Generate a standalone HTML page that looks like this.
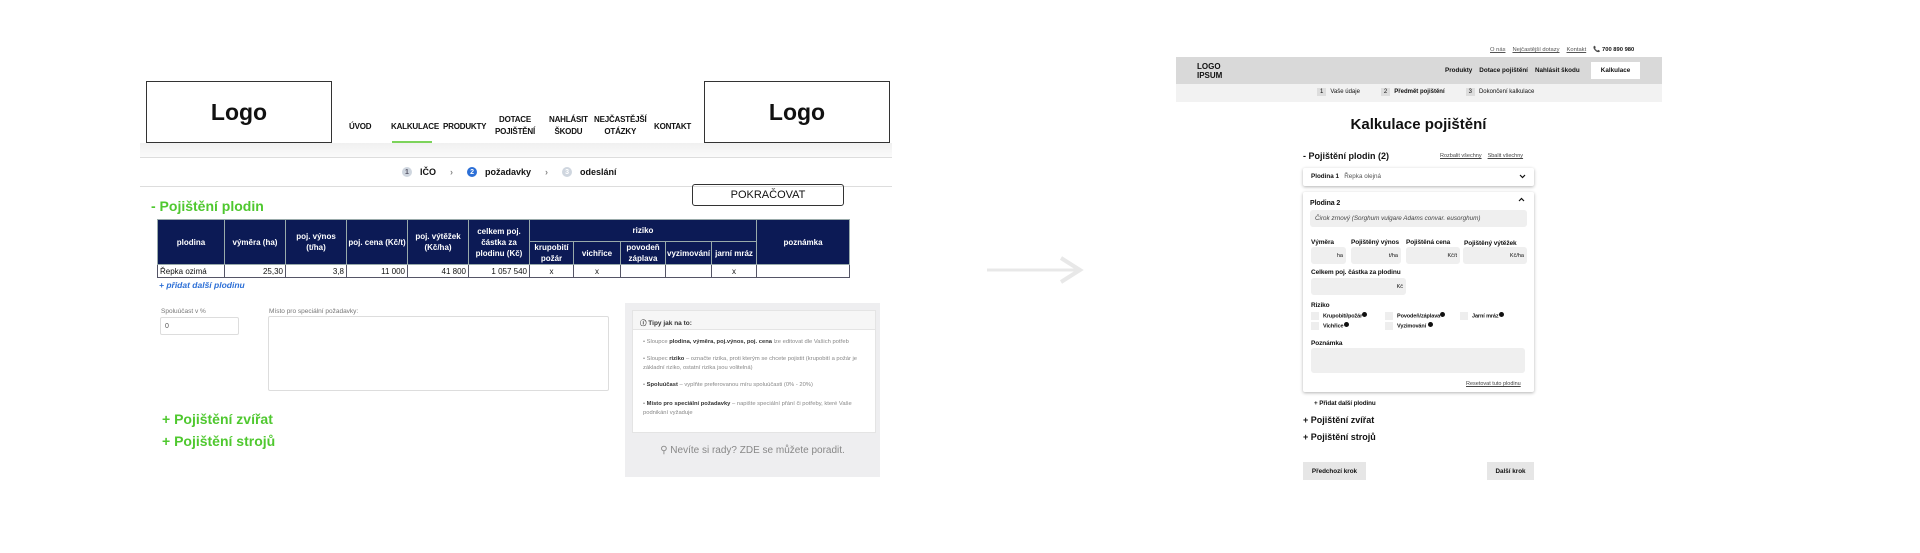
<!DOCTYPE html>
<html><head><meta charset="utf-8"><style>
*{box-sizing:border-box;margin:0;padding:0}
body{width:1920px;height:553px;background:#fff;position:relative;overflow:hidden;font-family:"Liberation Sans",sans-serif;color:#111}
.a{position:absolute}
.logo{border:1.5px solid #333;font-weight:bold;font-size:23px;display:flex;align-items:center;justify-content:center;background:#fff}
.nav{font-family:"Liberation Sans Narrow","Liberation Sans",sans-serif;font-size:8px;font-weight:bold;text-align:center;line-height:12px;color:#111;letter-spacing:-0.2px}
.green{color:#4fc82f;font-weight:bold;font-size:14px;font-family:"Liberation Sans Narrow","Liberation Sans",sans-serif}
table{border-collapse:collapse;font-size:8px;font-family:"Liberation Sans Narrow","Liberation Sans",sans-serif;table-layout:fixed}
th{background:#0c1a55;color:#fff;font-weight:bold;border:1px solid #9aa;padding:0 1px;line-height:11px;font-size:8px}
td{border:1px solid #556;height:13px;padding:0 2px;text-align:right;font-size:8px}
.g{background:#efefef;border-radius:3px}
.lbl{font-size:6.5px;font-weight:bold;letter-spacing:-0.1px}
.cb{width:8px;height:8px;background:#eee;display:inline-block;vertical-align:middle;margin-right:4px}
.i{display:inline-block;width:5px;height:5px;border-radius:50%;background:#111;vertical-align:top}
</style></head><body>
<!-- LEFT -->
<div class="a logo" style="left:146px;top:81px;width:186px;height:62px">Logo</div>
<div class="a logo" style="left:704px;top:81px;width:186px;height:62px">Logo</div>
<div class="a nav" style="left:349px;top:121px">ÚVOD</div>
<div class="a nav" style="left:391px;top:121px">KALKULACE</div>
<div class="a" style="left:392px;top:141px;width:40px;height:2px;background:#7cd35a"></div>
<div class="a nav" style="left:443px;top:121px">PRODUKTY</div>
<div class="a nav" style="left:495px;top:114px">DOTACE<br>POJIŠTĚNÍ</div>
<div class="a nav" style="left:549px;top:114px">NAHLÁSIT<br>ŠKODU</div>
<div class="a nav" style="left:594px;top:114px">NEJČASTĚJŠÍ<br>OTÁZKY</div>
<div class="a nav" style="left:654px;top:121px">KONTAKT</div>
<div class="a" style="left:140px;top:143px;width:752px;height:14px;background:linear-gradient(#f0f0f0,#fafafa)"></div>
<div class="a" style="left:140px;top:157px;width:752px;height:1px;background:#ddd"></div>
<div class="a" style="left:402px;top:167px;font-size:9px;font-weight:bold;display:flex;align-items:center;gap:8px;font-family:'Liberation Sans Narrow','Liberation Sans',sans-serif">
<span style="width:10px;height:10px;border-radius:50%;background:#cfd6df;color:#556;font-size:7px;display:inline-flex;align-items:center;justify-content:center">1</span>IČO<span style="color:#888;margin:0 6px">›</span>
<span style="width:10px;height:10px;border-radius:50%;background:#2c6fd6;color:#fff;font-size:7px;display:inline-flex;align-items:center;justify-content:center">2</span>požadavky<span style="color:#888;margin:0 6px">›</span>
<span style="width:10px;height:10px;border-radius:50%;background:#cfd6df;color:#fff;font-size:7px;display:inline-flex;align-items:center;justify-content:center">3</span>odeslání</div>
<div class="a" style="left:140px;top:186px;width:752px;height:1px;background:#ddd"></div>
<div class="a" style="left:692px;top:184px;width:152px;height:22px;border:1px solid #333;border-radius:3px;font-size:11px;display:flex;align-items:center;justify-content:center">POKRAČOVAT</div>
<div class="a green" style="left:151px;top:198px">- Pojištění plodin</div>
<table class="a" style="left:157px;top:219px;width:692px">
<colgroup><col style="width:67px"><col style="width:61px"><col style="width:61px"><col style="width:61px"><col style="width:61px"><col style="width:61px"><col style="width:44px"><col style="width:47px"><col style="width:45px"><col style="width:46px"><col style="width:45px"><col style="width:93px"></colgroup>
<tr style="height:22px"><th rowspan="2">plodina</th><th rowspan="2">výměra (ha)</th><th rowspan="2">poj. výnos<br>(t/ha)</th><th rowspan="2">poj. cena (Kč/t)</th><th rowspan="2">poj. výtěžek<br>(Kč/ha)</th><th rowspan="2">celkem poj.<br>částka za<br>plodinu (Kč)</th><th colspan="5">riziko</th><th rowspan="2">poznámka</th></tr>
<tr style="height:12px"><th>krupobití<br>požár</th><th>vichřice</th><th>povodeň<br>záplava</th><th>vyzimování</th><th>jarní mráz</th></tr>
<tr><td style="text-align:left">Řepka ozimá</td><td>25,30</td><td>3,8</td><td>11 000</td><td>41 800</td><td>1 057 540</td><td style="text-align:center">x</td><td style="text-align:center">x</td><td></td><td></td><td style="text-align:center">x</td><td></td></tr>
</table>
<div class="a" style="left:159px;top:280px;font-size:8.5px;font-weight:bold;font-style:italic;color:#2c6fd6;font-family:'Liberation Sans Narrow','Liberation Sans',sans-serif">+ přidat další plodinu</div>
<div class="a" style="left:161px;top:308px;font-size:6.5px;color:#777">Spoluúčast v %</div>
<div class="a" style="left:160px;top:317px;width:79px;height:18px;border:1px solid #ddd;border-radius:2px;font-size:7px;color:#555;padding:5px 4px">0</div>
<div class="a" style="left:269px;top:308px;font-size:6.5px;color:#777">Místo pro speciální požadavky:</div>
<div class="a" style="left:268px;top:316px;width:341px;height:75px;border:1px solid #ddd;border-radius:2px"></div>
<div class="a green" style="left:162px;top:411px">+ Pojištění zvířat</div>
<div class="a green" style="left:162px;top:433px">+ Pojištění strojů</div>
<div class="a" style="left:625px;top:303px;width:255px;height:174px;background:#eeeef0"></div>
<div class="a" style="left:632px;top:310px;width:244px;height:123px;background:#fff;border:1px solid #e4e4e4"></div>
<div class="a" style="left:632px;top:310px;width:244px;height:20px;background:#f6f6f6;border:1px solid #e4e4e4;font-size:6.5px;font-weight:bold;padding:6px 7px;color:#333">ⓘ Tipy jak na to:</div>
<div class="a" style="left:643px;top:338px;width:228px;font-size:5.8px;color:#888;line-height:9px">
<div>• Sloupce <b style="color:#333">plodina, výměra, poj.výnos, poj. cena</b> lze editovat dle Vašich potřeb</div>
<div style="margin-top:8px">• Sloupec <b style="color:#333">riziko</b> – označte rizika, proti kterým se chcete pojistit (krupobití a požár je základní riziko, ostatní rizika jsou volitelná)</div>
<div style="margin-top:8px">• <b style="color:#333">Spoluúčast</b> – vyplňte preferovanou míru spoluúčasti (0% - 20%)</div>
<div style="margin-top:10px">• <b style="color:#333">Místo pro speciální požadavky</b> – napište speciální přání či potřeby, které Vaše podnikání vyžaduje</div></div>
<div class="a" style="left:625px;top:445px;width:255px;text-align:center;font-size:10px;color:#888">⚲ Nevíte si rady? ZDE se můžete poradit.</div>
<!-- ARROW -->
<svg class="a" style="left:985px;top:254px" width="100" height="32"><path d="M2 16H92" stroke="#e8e8e8" stroke-width="3" fill="none"/><path d="M76 4L95 16L76 28" stroke="#e8e8e8" stroke-width="4" fill="none"/></svg>
<!-- RIGHT -->
<div class="a" style="left:1490px;top:47px;font-size:5.8px;color:#555;display:flex;gap:7px"><u>O nás</u><u>Nejčastější dotazy</u><u>Kontakt</u><b style="color:#111">📞 700 890 980</b></div>
<div class="a" style="left:1176px;top:57px;width:486px;height:27px;background:#d9d9d9"></div>
<div class="a" style="left:1197px;top:62px;font-size:8px;font-weight:bold;line-height:9px">LOGO<br>IPSUM</div>
<div class="a" style="left:1445px;top:67px;font-size:6.3px;font-weight:bold;display:flex;gap:7px"><span>Produkty</span><span>Dotace pojištění</span><span>Nahlásit škodu</span></div>
<div class="a" style="left:1591px;top:62px;width:49px;height:17px;background:#fff;font-size:6.3px;font-weight:bold;display:flex;align-items:center;justify-content:center">Kalkulace</div>
<div class="a" style="left:1176px;top:84px;width:486px;height:18px;background:#f2f2f2"></div>
<div class="a" style="left:1317px;top:88px;font-size:6px;display:flex;align-items:center;gap:4px">
<span style="background:#ddd;padding:1px 3px">1</span><span style="margin-right:17px">Vaše údaje</span>
<span style="background:#ddd;padding:1px 3px">2</span><b style="margin-right:17px">Předmět pojištění</b>
<span style="background:#ddd;padding:1px 3px">3</span><span>Dokončení kalkulace</span></div>
<div class="a" style="left:1303px;top:116px;width:231px;text-align:center;font-size:15px;font-weight:bold">Kalkulace pojištění</div>
<div class="a" style="left:1303px;top:151px;font-size:9px;font-weight:bold">- Pojištění plodin (2)</div>
<div class="a" style="left:1440px;top:153px;font-size:5.5px;color:#444;display:flex;gap:6px"><u>Rozbalit všechny</u><u>Sbalit všechny</u></div>
<div class="a" style="left:1303px;top:168px;width:231px;height:18px;background:#fff;box-shadow:0 1px 3px rgba(0,0,0,.3);border-radius:2px;font-size:6.3px;padding:5px 8px"><b>Plodina 1</b>&nbsp;&nbsp;&nbsp;<span style="color:#555">Řepka olejná</span><svg style="position:absolute;right:8px;top:6px" width="7" height="5"><path d="M1 1L3.5 3.5L6 1" stroke="#111" stroke-width="1.2" fill="none"/></svg></div>
<div class="a" style="left:1303px;top:192px;width:231px;height:200px;background:#fff;box-shadow:0 1px 3px rgba(0,0,0,.3);border-radius:2px"></div>
<div class="a lbl" style="left:1310px;top:200px;font-size:7px">Plodina 2</div>
<svg class="a" style="left:1518px;top:197px" width="7" height="5"><path d="M1 4L3.5 1.5L6 4" stroke="#111" stroke-width="1.2" fill="none"/></svg>
<div class="a g" style="left:1310px;top:210px;width:217px;height:17px;font-size:6.3px;font-style:italic;color:#444;padding:5px 5px">Čirok zrnový (Sorghum vulgare Adams convar. eusorghum)</div>
<div class="a lbl" style="left:1311px;top:239px">Výměra</div>
<div class="a lbl" style="left:1351px;top:239px">Pojištěný výnos</div>
<div class="a lbl" style="left:1406px;top:239px">Pojištěná cena</div>
<div class="a lbl" style="left:1464px;top:240px">Pojištěný výtěžek</div>
<div class="a g" style="left:1311px;top:247px;width:35px;height:17px;font-size:5.5px;text-align:right;padding:6px 3px">ha</div>
<div class="a g" style="left:1351px;top:247px;width:50px;height:17px;font-size:5.5px;text-align:right;padding:6px 3px">t/ha</div>
<div class="a g" style="left:1406px;top:247px;width:54px;height:17px;font-size:5.5px;text-align:right;padding:6px 3px">Kč/t</div>
<div class="a g" style="left:1463px;top:247px;width:64px;height:17px;font-size:5.5px;text-align:right;padding:6px 3px">Kč/ha</div>
<div class="a lbl" style="left:1311px;top:269px">Celkem poj. částka za plodinu</div>
<div class="a g" style="left:1311px;top:278px;width:95px;height:17px;font-size:5.5px;text-align:right;padding:6px 3px">Kč</div>
<div class="a lbl" style="left:1311px;top:302px">Riziko</div>
<div class="a lbl" style="left:1311px;top:312px;font-size:5.5px"><span class="cb"></span>Krupobití/požár<span class="i"></span></div>
<div class="a lbl" style="left:1385px;top:312px;font-size:5.5px"><span class="cb"></span>Povodeň/záplava<span class="i"></span></div>
<div class="a lbl" style="left:1460px;top:312px;font-size:5.5px"><span class="cb"></span>Jarní mráz<span class="i"></span></div>
<div class="a lbl" style="left:1311px;top:322px;font-size:5.5px"><span class="cb"></span>Vichřice<span class="i"></span></div>
<div class="a lbl" style="left:1385px;top:322px;font-size:5.5px"><span class="cb"></span>Vyzimování <span class="i"></span></div>
<div class="a lbl" style="left:1311px;top:340px">Poznámka</div>
<div class="a g" style="left:1311px;top:348px;width:214px;height:25px"></div>
<div class="a" style="left:1466px;top:381px;font-size:5.5px;color:#444"><u>Resetovat tuto plodinu</u></div>
<div class="a lbl" style="left:1314px;top:400px;font-size:6.3px">+ Přidat další plodinu</div>
<div class="a" style="left:1303px;top:415px;font-size:9px;font-weight:bold">+ Pojištění zvířat</div>
<div class="a" style="left:1303px;top:432px;font-size:9px;font-weight:bold">+ Pojištění strojů</div>
<div class="a" style="left:1303px;top:462px;width:63px;height:18px;background:#e6e6e6;font-size:6.3px;font-weight:bold;display:flex;align-items:center;justify-content:center">Předchozí krok</div>
<div class="a" style="left:1487px;top:462px;width:47px;height:18px;background:#e6e6e6;font-size:6.3px;font-weight:bold;display:flex;align-items:center;justify-content:center">Další krok</div>
</body></html>
